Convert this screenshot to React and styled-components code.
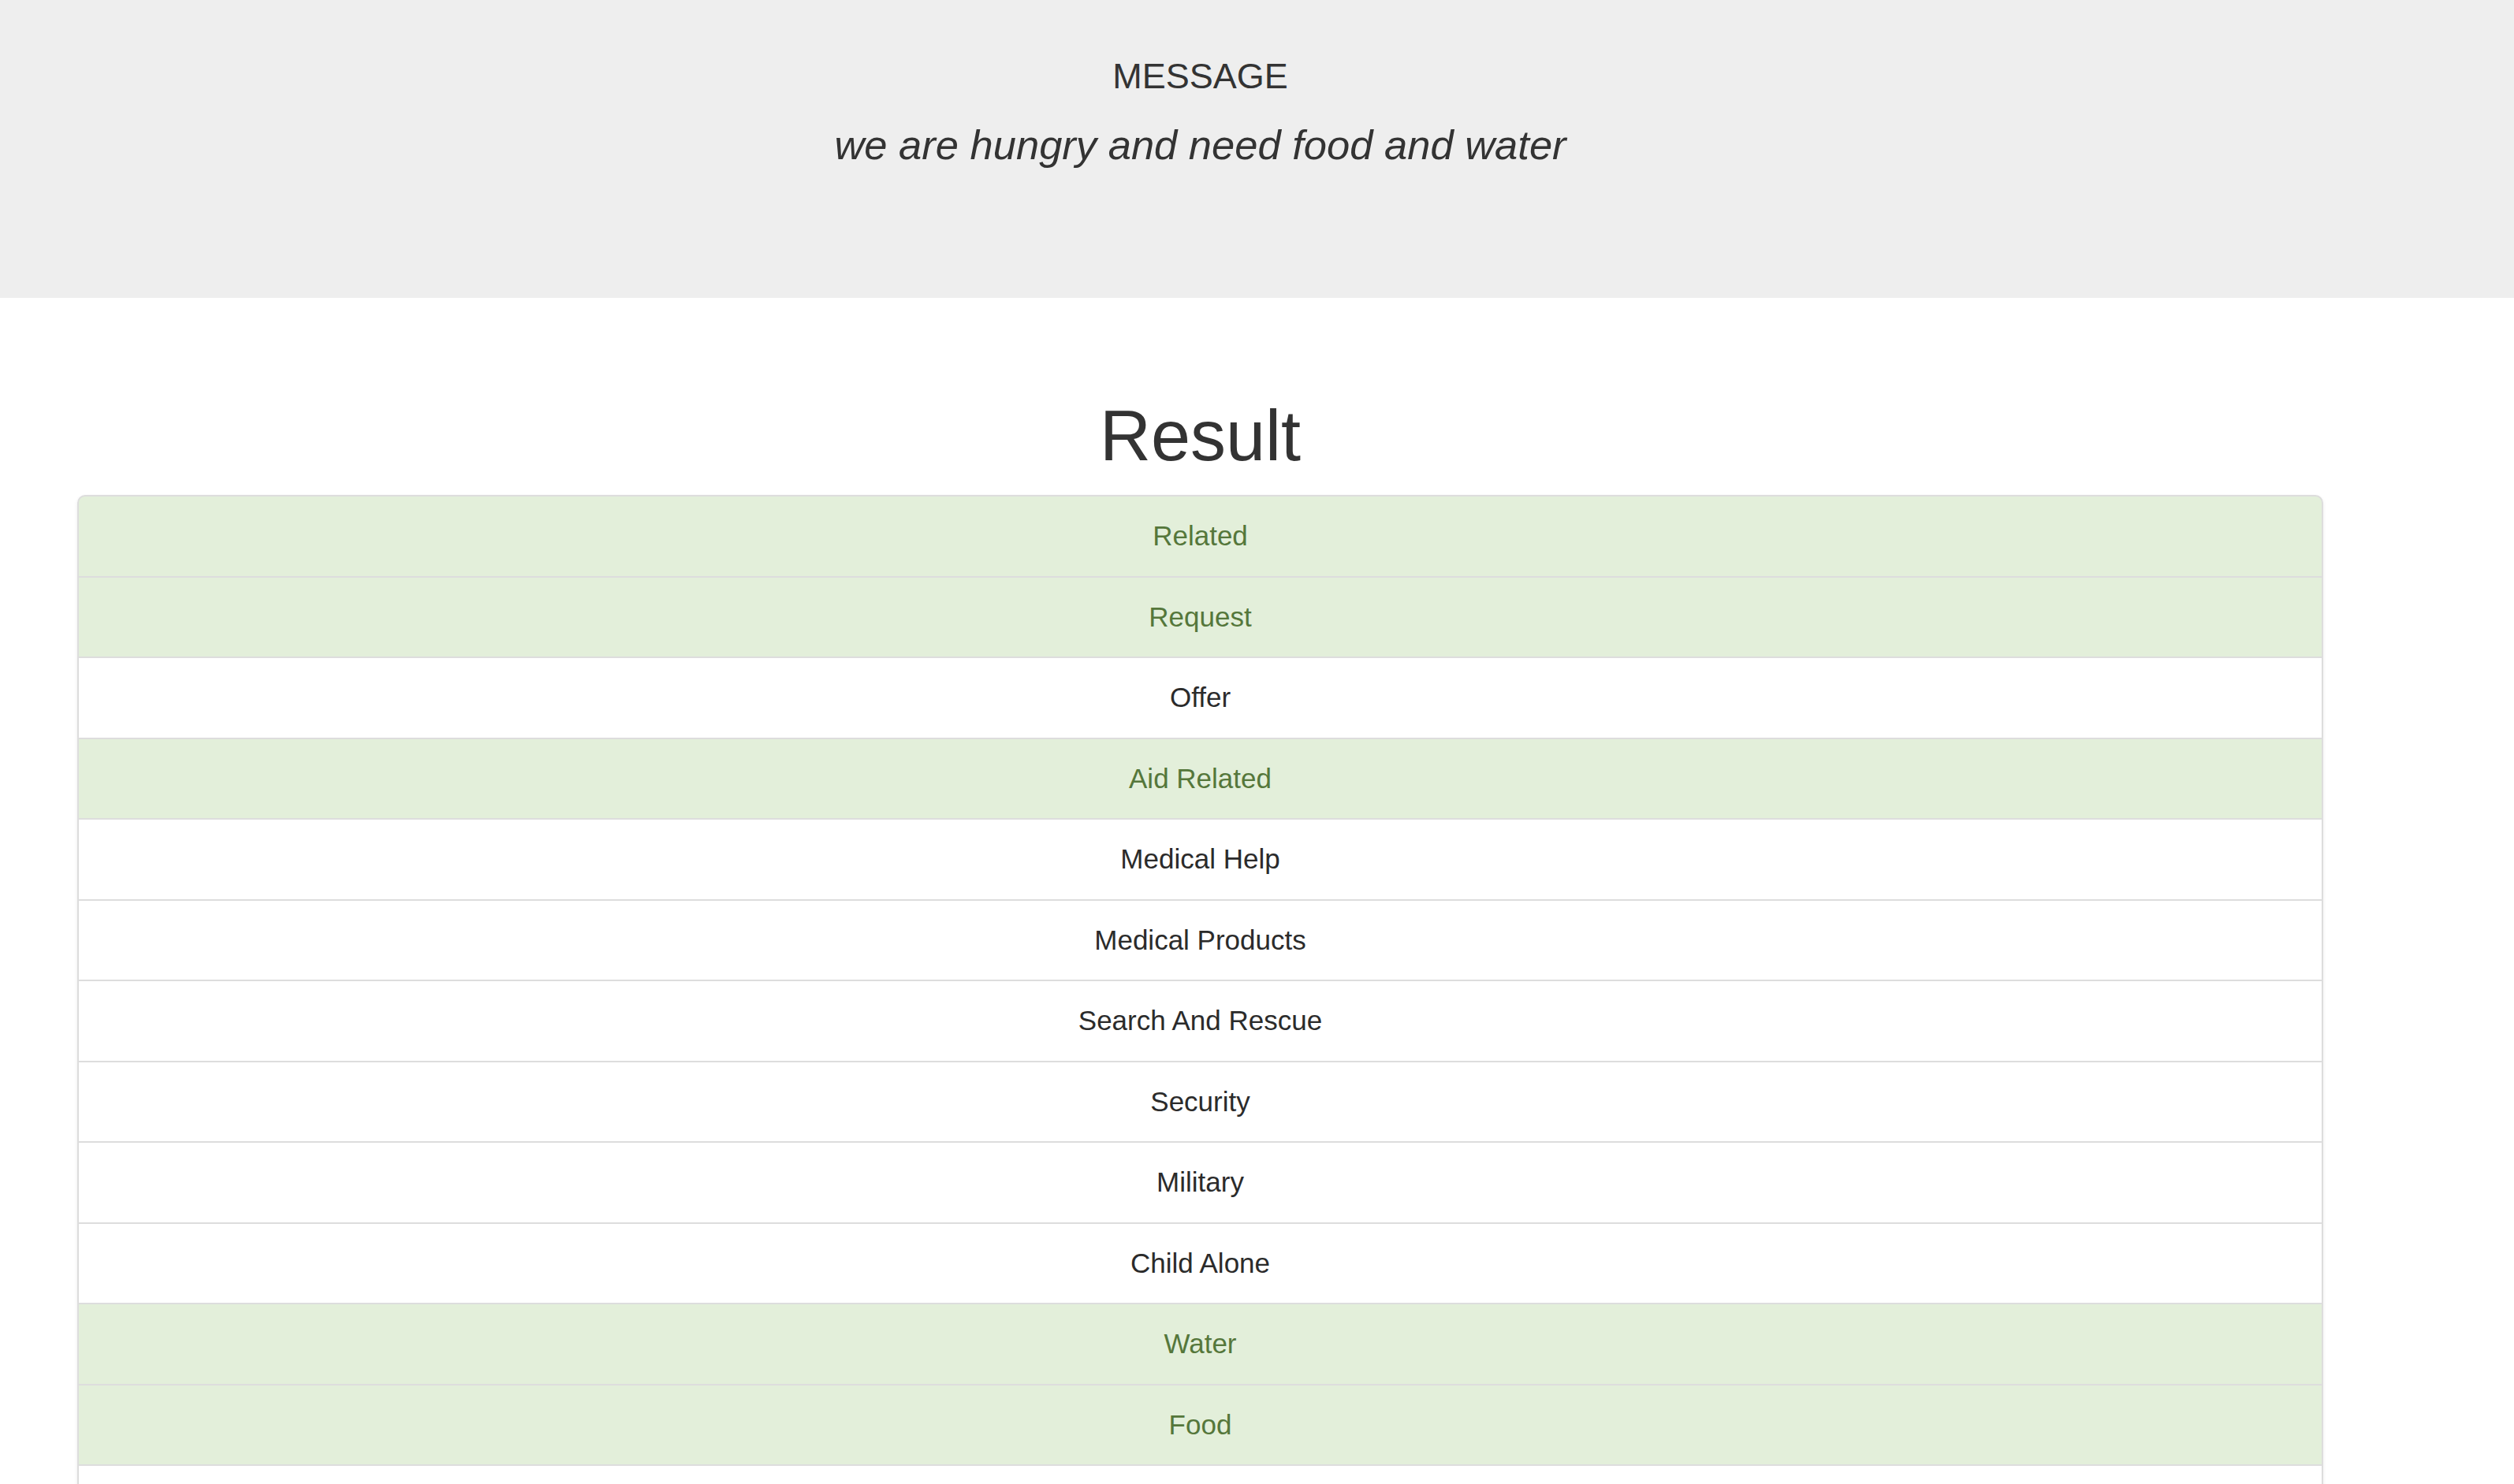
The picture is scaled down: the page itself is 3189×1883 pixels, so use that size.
import React from "react";
import styled, { createGlobalStyle } from "styled-components";

const GlobalStyle = createGlobalStyle`
  html, body {
    margin: 0;
    padding: 0;
    background: #fff;
  }
  body {
    font-family: "Liberation Sans", Arial, Helvetica, sans-serif;
    font-size: 35px;
    line-height: 50px;
    color: #333;
  }
  * { box-sizing: border-box; }
`;

const Jumbotron = styled.header`
  height: 378px;
  padding-top: 72px;
  background: #eee;
`;

const Container = styled.div`
  padding: 0 242px 0 98px;
  text-align: center;
`;

const Label = styled.h4`
  margin: 0 0 25px;
  font-size: 45px;
  font-weight: 400;
  line-height: 1.1;
  color: #333;
`;

const Lead = styled.p`
  margin: 0;
  font-size: 52.5px;
  line-height: 1.4;
  font-weight: 300;
  font-style: italic;
  color: #333;
`;

const Title = styled.h1`
  margin: 126px 0 25px;
  font-size: 90px;
  font-weight: 400;
  line-height: 1.1;
  text-align: center;
  color: #333;
`;

const List = styled.ul`
  margin: 0;
  padding: 0;
  list-style: none;
  border-radius: 10px;
  box-shadow: 0 2.5px 5px rgba(0, 0, 0, 0.075);
`;

const Item = styled.li`
  display: block;
  padding: 25.25px 37.5px;
  margin-bottom: -2px;
  border: 2px solid #ddd;
  text-align: center;
  line-height: 50px;
  background: ${(p) => (p.$success ? "#e3efda" : "#fff")};
  color: ${(p) => (p.$success ? "#55773b" : "#2b2b2b")};

  &:first-child {
    border-top-left-radius: 10px;
    border-top-right-radius: 10px;
  }
  &:last-child {
    margin-bottom: 0;
    border-bottom-left-radius: 10px;
    border-bottom-right-radius: 10px;
  }
`;

const categories = [
  ["Related", true],
  ["Request", true],
  ["Offer", false],
  ["Aid Related", true],
  ["Medical Help", false],
  ["Medical Products", false],
  ["Search And Rescue", false],
  ["Security", false],
  ["Military", false],
  ["Child Alone", false],
  ["Water", true],
  ["Food", true],
  ["Shelter", false],
  ["Clothing", false],
  ["Money", false],
  ["Missing People", false],
  ["Refugees", false],
  ["Death", false],
  ["Other Aid", false],
  ["Infrastructure Related", false],
  ["Transport", false],
  ["Buildings", false],
  ["Electricity", false],
  ["Tools", false],
  ["Hospitals", false],
  ["Shops", false],
  ["Aid Centers", false],
  ["Other Infrastructure", false],
  ["Weather Related", false],
  ["Floods", false],
  ["Storm", false],
  ["Fire", false],
  ["Earthquake", false],
  ["Cold", false],
  ["Other Weather", false],
  ["Direct Report", true],
];

export default function App() {
  return (
    <>
      <GlobalStyle />
      <Jumbotron>
        <Container>
          <Label>MESSAGE</Label>
          <Lead>we are hungry and need food and water</Lead>
        </Container>
      </Jumbotron>
      <Container>
        <Title>Result</Title>
        <List>
          {categories.map(([name, ok]) => (
            <Item key={name} $success={ok}>
              {name}
            </Item>
          ))}
        </List>
      </Container>
    </>
  );
}
